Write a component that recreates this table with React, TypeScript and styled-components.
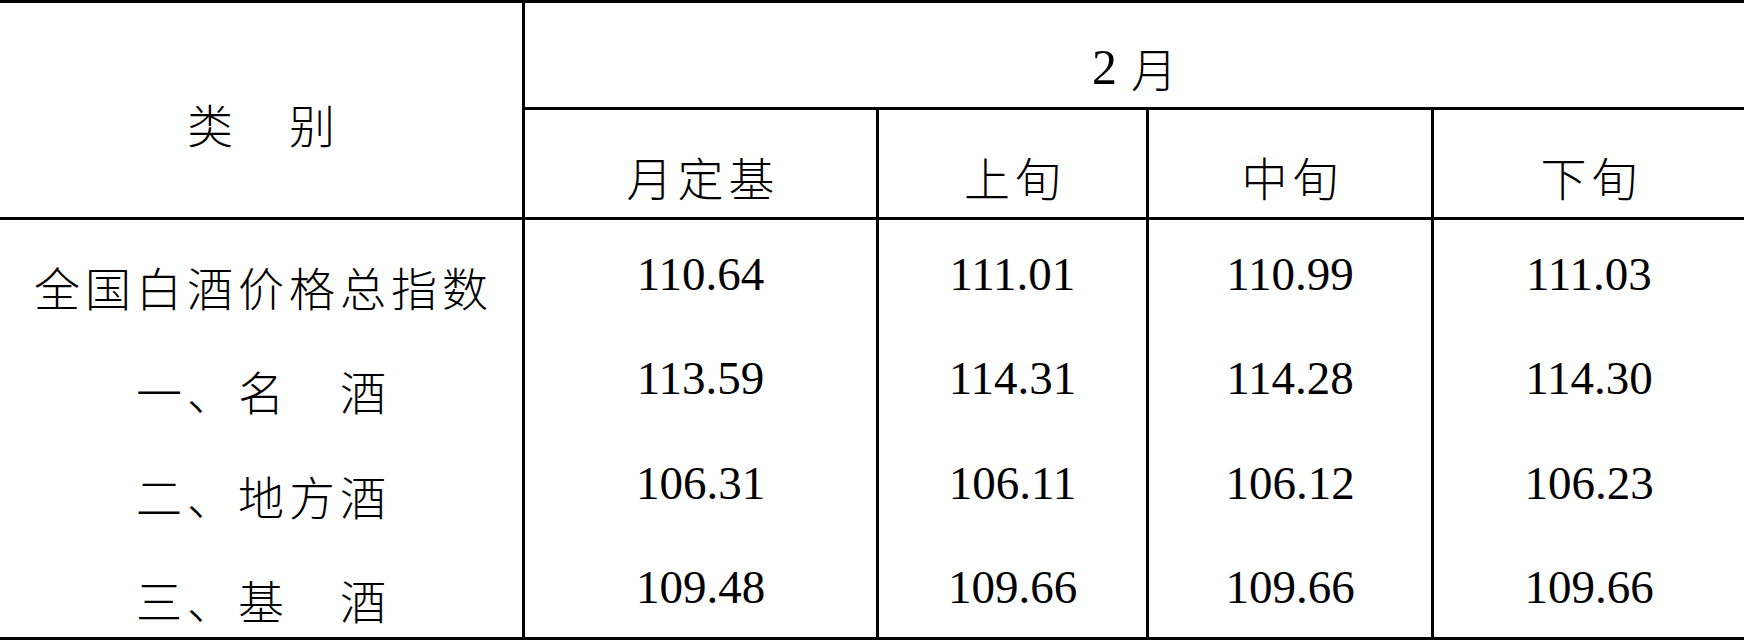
import React from 'react';
import styled, { createGlobalStyle } from 'styled-components';

const GlobalStyle = createGlobalStyle`
  html, body {
    margin: 0;
    padding: 0;
    background: #ffffff;
  }
`;

const cjk = `"Noto Sans CJK SC", "Noto Sans", sans-serif`;
const latin = `"Liberation Serif", "Noto Sans CJK SC", serif`;

const Table = styled.div`
  width: 1744px;
  height: 640px;
  box-sizing: border-box;
  padding: 3px 0;
  background: #000;
  display: grid;
  grid-template-columns: 522px 351px 267px 282px 310px;
  grid-template-rows: 104px 107px 417px;
  column-gap: 3px;
  row-gap: 3px;
`;

const Cell = styled.div<{ $col: string; $row: string }>`
  grid-column: ${(p) => p.$col};
  grid-row: ${(p) => p.$row};
  background: #fff;
  display: flex;
  flex-direction: column;
`;

const HeadText = styled.div<{ $shift: number }>`
  flex: 1;
  display: flex;
  align-items: center;
  justify-content: center;
  padding-top: ${(p) => p.$shift}px;
  font-family: ${cjk};
  font-size: 46px;
  font-weight: 300;
  letter-spacing: 5px;
  text-indent: 5px;
  color: #000;
  white-space: pre;
`;

const MonthText = styled.div`
  flex: 1;
  display: flex;
  align-items: center;
  justify-content: center;
  padding-top: 24px;
  color: #000;
`;

const Digit = styled.span`
  font-family: ${latin};
  font-size: 50px;
`;

const MonthChar = styled.span`
  margin-left: 14px;
  font-family: ${cjk};
  font-size: 46px;
  font-weight: 300;
`;

const Line = styled.div<{ $cjk?: boolean }>`
  flex: 1;
  display: flex;
  align-items: center;
  justify-content: center;
  padding-top: ${(p) => (p.$cjk ? 28 : 4)}px;
  font-family: ${(p) => (p.$cjk ? cjk : latin)};
  font-size: ${(p) => (p.$cjk ? 46 : 47)}px;
  font-weight: ${(p) => (p.$cjk ? 300 : 400)};
  letter-spacing: ${(p) => (p.$cjk ? 5 : 0)}px;
  text-indent: ${(p) => (p.$cjk ? 5 : 0)}px;
  color: #000;
  white-space: pre;
`;

const categories = ['全国白酒价格总指数', '一、名　酒', '二、地方酒', '三、基　酒'];

const columns = [
  { title: '月定基', values: ['110.64', '113.59', '106.31', '109.48'] },
  { title: '上旬', values: ['111.01', '114.31', '106.11', '109.66'] },
  { title: '中旬', values: ['110.99', '114.28', '106.12', '109.66'] },
  { title: '下旬', values: ['111.03', '114.30', '106.23', '109.66'] },
];

export default function App() {
  return (
    <>
      <GlobalStyle />
      <Table>
        <Cell $col="1" $row="1 / span 2">
          <HeadText $shift={25}>类　别</HeadText>
        </Cell>
        <Cell $col="2 / span 4" $row="1">
          <MonthText>
            <Digit>2</Digit>
            <MonthChar>月</MonthChar>
          </MonthText>
        </Cell>
        {columns.map((c, i) => (
          <Cell key={c.title} $col={`${i + 2}`} $row="2">
            <HeadText $shift={25}>{c.title}</HeadText>
          </Cell>
        ))}
        <Cell $col="1" $row="3">
          {categories.map((name) => (
            <Line key={name} $cjk>
              {name}
            </Line>
          ))}
        </Cell>
        {columns.map((c, i) => (
          <Cell key={c.title + '-v'} $col={`${i + 2}`} $row="3">
            {c.values.map((v, j) => (
              <Line key={j}>{v}</Line>
            ))}
          </Cell>
        ))}
      </Table>
    </>
  );
}
